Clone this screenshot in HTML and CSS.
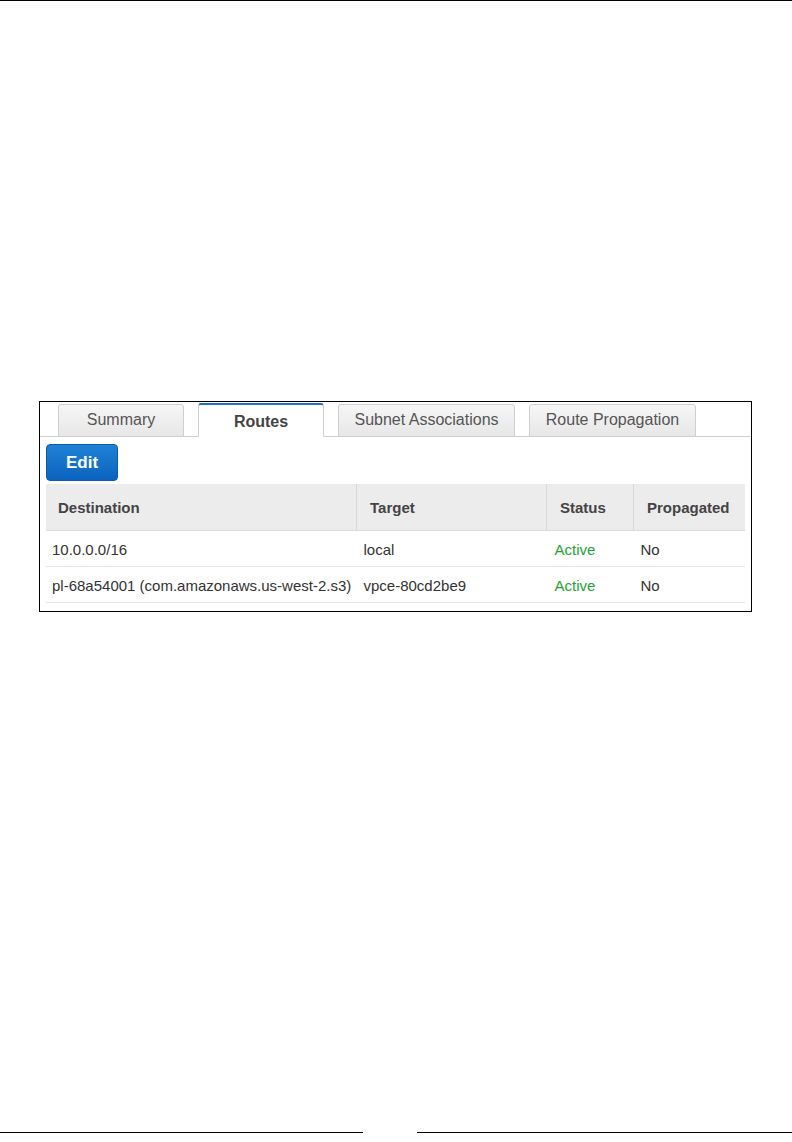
FILE: index.html
```html
<!DOCTYPE html>
<html lang="en">
<head>
    <meta charset="UTF-8">
    <title>Route Table - Routes</title>
    <link rel="stylesheet" href="styles.css">
</head>
<body>
    <div class="page">
        <div class="rule-top"></div>

        <div class="shot">
            <div class="tabs">
                <div class="tab tab-summary">Summary</div>
                <div class="tab tab-routes active">Routes</div>
                <div class="tab tab-subnets">Subnet Associations</div>
                <div class="tab tab-prop">Route Propagation</div>
            </div>
            <div class="panel">
                <button class="btn-edit">Edit</button>
                <table class="routes">
                    <thead>
                        <tr>
                            <th class="col-dest">Destination</th>
                            <th class="col-target">Target</th>
                            <th class="col-status">Status</th>
                            <th class="col-prop">Propagated</th>
                        </tr>
                    </thead>
                    <tbody>
                        <tr>
                            <td>10.0.0.0/16</td>
                            <td>local</td>
                            <td class="active-status">Active</td>
                            <td>No</td>
                        </tr>
                        <tr>
                            <td>pl-68a54001 (com.amazonaws.us-west-2.s3)</td>
                            <td>vpce-80cd2be9</td>
                            <td class="active-status">Active</td>
                            <td>No</td>
                        </tr>
                    </tbody>
                </table>
            </div>
        </div>

        <div class="footer">
            <div class="rule-left"></div>
            <div class="rule-right"></div>
        </div>
    </div>
</body>
</html>
```

FILE: styles.css
```css
body {
    margin: 0;
    padding: 0;
    background: #fff;
    font-family: 'Liberation Sans', Arial, sans-serif;
    color: #333;
}

.page {
    height: 1142px;
    display: flex;
    flex-direction: column;
}

.rule-top {
    height: 1px;
    background: #000;
}

/* framed screenshot */
.shot {
    margin: 400px 0 0 39px;
    width: 711px;
    height: 209px;
    border: 1px solid #000;
    display: flex;
    flex-direction: column;
}

.tabs {
    display: flex;
    align-items: flex-end;
    gap: 14px;
    padding-left: 18px;
    height: 34px;
    border-bottom: 1px solid #cfcfcf;
}

.tab {
    box-sizing: border-box;
    height: 34px;
    margin-bottom: -1px;
    border: 1px solid #cfcfcf;
    border-radius: 3px 3px 0 0;
    background: linear-gradient(#f6f6f6, #e7e7e7);
    color: #555;
    font-size: 16px;
    text-align: center;
    line-height: 30px;
    white-space: nowrap;
}

.tab-summary { width: 126px; height: 33px; }
.tab-routes { width: 126px; }
.tab-subnets { width: 177px; height: 33px; }
.tab-prop { width: 167px; height: 33px; }

.tab.active {
    background: #fff;
    border-top: 2px solid #1a73c9;
    border-bottom-color: #fff;
    color: #444;
    font-weight: bold;
    line-height: 33px;
}

.panel {
    padding: 7px 6px 0 6px;
}

.btn-edit {
    display: block;
    width: 72px;
    height: 37px;
    border: 1px solid #0a5aa8;
    border-radius: 4px;
    background: linear-gradient(#1f82d6, #0b63bd);
    color: #fff;
    font-family: 'Liberation Sans', Arial, sans-serif;
    font-size: 17px;
    font-weight: bold;
    padding: 0;
}

.routes {
    margin-top: 3px;
    width: 699px;
    border-collapse: collapse;
    font-size: 15px;
}

.routes th {
    height: 46px;
    padding: 0 0 0 12px;
    background: #ececec;
    color: #444;
    font-weight: bold;
    text-align: left;
    border-bottom: 1px solid #dcdcdc;
    white-space: nowrap;
}

.routes th + th {
    border-left: 1px solid #d8d8d8;
    padding-left: 13px;
}

.col-dest { width: 298px; }
.col-target { width: 176px; }
.col-status { width: 73px; }

.routes td {
    height: 34px;
    padding: 1px 0 0 6px;
    border-bottom: 1px solid #e6e6e6;
    color: #333;
    white-space: nowrap;
}

.routes td + td {
    padding-left: 7px;
}

.routes td.active-status {
    color: #22a534;
    padding-left: 8px;
}

.footer {
    margin-top: auto;
    margin-bottom: 9px;
    display: flex;
    justify-content: space-between;
}

.rule-left {
    width: 363px;
    height: 1px;
    background: #000;
}

.rule-right {
    width: 375px;
    height: 1px;
    background: #000;
}
```
